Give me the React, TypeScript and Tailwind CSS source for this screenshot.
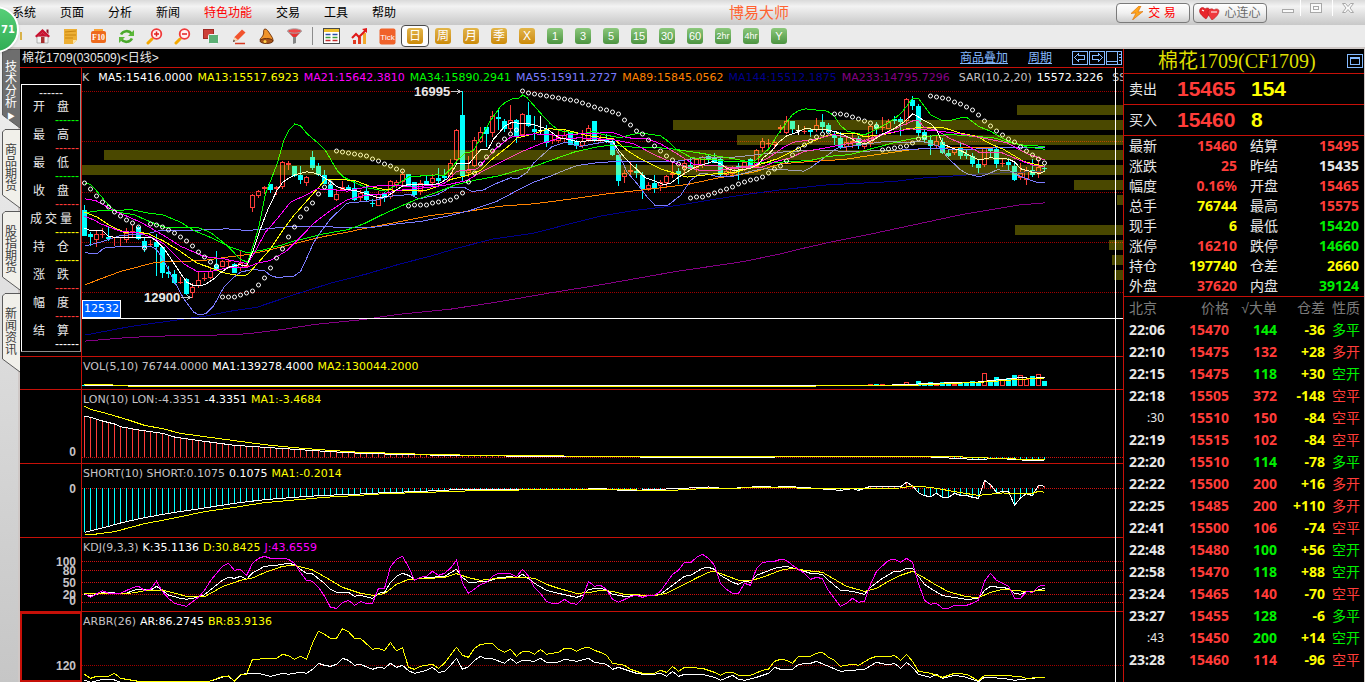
import type { ReactNode } from 'react'

const RED = '#ff3c39'
const CYAN = '#00ffff'

const menus = ['系统', '页面', '分析', '新闻', '特色功能', '交易', '工具', '帮助']
const periods = ['日', '周', '月', '季', 'X']
const minutes = ['1', '3', '5', '15', '30', '60', '2hr', '4hr', 'Y']
const sideTabs = ['技术分析', '商品期货', '股指期货', '新闻资讯']

const infoRows = [
  { label: '开盘', color: 'text-[#00ff00]' },
  { label: '最高', color: 'text-[#ff3c39]' },
  { label: '最低', color: 'text-[#00ff00]' },
  { label: '收盘', color: 'text-[#ff3c39]' },
  { label: '成交量', color: 'text-[#ffff00]' },
  { label: '持仓', color: 'text-[#ffff00]' },
  { label: '涨跌', color: 'text-[#ff3c39]' },
  { label: '幅度', color: 'text-[#ff3c39]' },
  { label: '结算', color: 'text-white' },
]

const red = 'text-[#ff3c39]'
const green = 'text-[#00f000]'
const yellow = 'text-[#ffff00]'
const white = 'text-[#e8e8e8]'

const stats = [
  ['最新', '15460', red, '结算', '15495', red],
  ['涨跌', '25', red, '昨结', '15435', white],
  ['幅度', '0.16%', red, '开盘', '15465', red],
  ['总手', '76744', yellow, '最高', '15575', red],
  ['现手', '6', yellow, '最低', '15420', green],
  ['涨停', '16210', red, '跌停', '14660', green],
  ['持仓', '197740', yellow, '仓差', '2660', yellow],
  ['外盘', '37620', red, '内盘', '39124', green],
]

const ticks = [
  ['22:06', '15470', '144', '-36', '多平', green],
  ['22:10', '15475', '132', '+28', '多开', red],
  ['22:15', '15475', '118', '+30', '空开', green],
  ['22:18', '15505', '372', '-148', '空平', red],
  [':30', '15510', '150', '-84', '空平', red],
  ['22:19', '15515', '102', '-84', '空平', red],
  ['22:20', '15510', '114', '-78', '多平', green],
  ['22:22', '15500', '200', '+16', '多开', red],
  ['22:25', '15485', '200', '+110', '多开', red],
  ['22:41', '15500', '106', '-74', '空平', red],
  ['22:48', '15480', '100', '+56', '空开', green],
  ['22:58', '15470', '118', '+88', '空开', green],
  ['23:24', '15465', '140', '-70', '空平', red],
  ['23:27', '15455', '128', '-6', '多平', green],
  [':43', '15450', '200', '+14', '空开', green],
  ['23:28', '15460', '114', '-96', '空平', red],
]

// colour, high, body top, body bottom, low - three units to a pixel, growing downwards
const candles = `
c375,390,467,467 c457,462,471,497 r452,463,482,502 r443,463,466,475 c437,471,476,484 r470,472,475,499 r470,472,475,499 r443,460,482,490
r435,453,456,475 c438,442,479,479 c470,483,503,515 r480,491,494,499 c461,485,500,588 c497,500,578,594 c558,575,582,594 c570,582,609,612
r591,607,610,612 c594,598,644,645 r610,622,641,655 r575,601,620,624 r580,594,597,603 r563,572,592,598 c513,554,566,568 r541,544,562,562
r541,543,547,560 c550,552,578,578 r510,548,562,573 r545,555,562,562 r343,346,386,396 r330,332,346,354 r318,322,328,343 c312,312,329,340
r318,320,327,345 r243,247,322,328 r243,250,256,270 c257,258,287,290 c258,284,299,311 r287,292,310,317 c213,231,264,270 c250,257,285,288
c270,286,313,313 c300,314,350,350 r327,341,358,362 r303,322,332,334 c315,322,327,332 c300,325,360,362 r330,338,352,363 c318,334,362,364
c357,368,372,380 r333,342,377,378 c335,339,354,367 r300,302,350,358 r300,306,316,325 r273,282,305,315 c282,283,320,322 c306,307,345,347
r300,309,337,345 c288,303,312,318 r283,295,309,312 c265,294,302,318 c267,288,294,300 r238,249,290,294 r148,150,240,248 c34,105,287,303
r228,270,280,290 r170,181,258,262 r140,157,187,190 c140,142,162,200 r93,108,160,172 c90,111,118,150 c117,123,147,157 r75,121,147,155
c117,120,170,188 r100,103,165,170 c66,105,138,140 c107,147,156,180 w108,151,154,165 c135,147,188,202 r160,180,183,193 r150,170,182,190
r150,165,178,185 c155,157,195,195 c180,183,197,206 r150,183,197,203 r135,143,180,185 c123,123,183,187 r165,178,182,190 c162,178,184,190
c180,184,227,227 c225,226,303,318 r270,278,290,308 r243,271,276,285 c252,272,277,294 c277,285,327,357 r305,314,326,334 c285,309,324,338
r300,306,318,332 r285,289,310,320 r250,278,284,294 c264,273,283,311 r235,250,264,284 c235,254,266,268 r236,238,265,277 r228,230,255,264
c222,228,236,252 c220,233,247,250 c235,237,285,290 r258,272,285,288 r258,264,282,290 c250,258,264,300 r243,247,270,273 c233,238,262,265
r208,211,262,264 r175,184,206,216 r177,190,194,205 r180,187,196,207 r135,142,147,160 r108,124,160,163 c123,124,148,158 w135,149,152,165
r138,153,157,162 c145,149,155,170 r114,136,152,157 c102,126,140,155 c130,135,157,160 c155,166,176,195 c155,175,202,206 r170,186,200,214
r155,183,188,204 c168,175,200,207 r178,191,200,207 r135,139,189,200 c127,136,147,162 r111,142,146,157 r117,122,145,148 c108,117,124,133
c110,118,128,167 r54,58,125,135 c48,60,77,90 c72,78,158,168 c150,156,180,187 c166,179,196,224 r168,184,199,205 c173,185,218,222
c210,219,227,230 r200,208,220,225 c190,204,228,238 c210,223,229,238 c219,227,251,262 c240,252,263,282 r200,205,256,260 c200,204,213,230
c200,208,252,264 r235,250,254,262 c235,246,255,270 c250,258,299,302 r250,280,296,300 r260,271,300,315 c237,270,284,291 r240,262,280,294
c255,263,266,277`
  .trim()
  .split(/\s+/)
  .map((s) => {
    const [high, top, bottom, low] = s.slice(1).split(',').map(Number)
    return { kind: s[0], high, top, bottom, low }
  })

// first candle of the run, then one dot per candle
const sar: [number, number[]][] = [
  [0, [310, 328, 347, 365, 382, 397, 409, 421, 430, 440, 503]],
  [11, [433, 436, 441, 451, 460, 470, 484, 499, 517, 532, 547, 558]],
  [23, [652, 650, 650, 646, 640, 634, 616, 595, 565, 535, 508, 472, 440, 412, 388, 370, 343, 322, 308]],
  [42, [214, 217, 220, 223, 226, 229, 236, 244, 253, 259, 268, 274]],
  [54, [379, 376, 374, 374, 370, 367, 364, 361, 352, 338, 307, 280, 253, 232, 214, 196, 178, 163, 151]],
  [73, [34, 40, 43, 46, 49, 52, 55, 58, 61, 64, 70, 76, 82, 86, 91, 95, 103, 121, 136, 152, 163, 181, 199, 214, 229, 241, 253, 263]],
  [101, [355, 352, 352, 346, 338, 332, 326, 320, 313, 307, 301, 298, 290, 280, 268, 259, 244, 226, 208, 196, 184, 172, 162, 155]],
  [125, [103, 103, 106, 112, 118, 124, 130, 137]],
  [133, [211, 208, 205, 202, 199, 190, 178, 170]],
  [141, [49, 52, 55, 58, 67, 73, 82, 91, 106, 124, 139, 154, 166, 178, 187, 202, 214, 226, 238, 250]],
]

const priceLines = [
  { color: '#840084', d: '12,782 130,772 220,767 370,765 501,760 620,745 700,732 850,717 950,702 1050,692 1110,686 1260,663 1410,637 1560,613 1780,574 1990,543 2100,520 2170,503 2240,487 2360,463 2500,433 2640,403 2820,373 2893,367' },
  { color: '#00008c', d: '12,764 150,738 300,717 380,706 450,692 530,680 640,643 750,608 860,580 960,550 1050,527 1130,503 1240,475 1360,458 1460,432 1560,407 1660,390 1790,375 1910,355 2010,340 2100,328 2240,313 2440,303 2520,293 2640,285 2700,280 2893,272' },
  { color: '#ff8200', d: '12,614 60,595 120,573 200,552 229,545 320,542 370,540 440,530 501,522 560,510 620,495 680,480 730,468 800,455 870,440 950,425 1050,405 1160,393 1260,377 1360,370 1460,357 1580,340 1700,327 1820,312 1910,293 2020,275 2100,250 2190,243 2290,237 2390,222 2490,208 2540,203 2893,200' },
  { color: '#7b7bff', d: '12,497 60,485 120,465 200,460 240,450 330,450 440,445 501,450 560,445 640,437 780,440 880,440 950,430 1020,423 1110,405 1175,388 1250,362 1310,330 1360,305 1410,287 1450,270 1490,255 1560,245 1660,243 1790,242 1860,232 1960,230 2100,215 2210,208 2300,213 2440,210 2520,205 2680,206 2780,200 2893,200' },
  { color: '#7b7bff', d: '12,514 30,520 50,520 70,503 120,498 210,497 229,508 250,540 280,600 310,655 340,695 355,703 375,700 400,675 430,620 460,590 480,575 510,568 550,569 570,585 590,591 640,587 660,573 680,530 700,485 720,455 750,415 800,368 880,360 930,347 990,342 1015,355 1070,343 1110,320 1150,320 1175,333 1210,328 1240,312 1290,292 1310,295 1340,275 1360,247 1390,220 1415,198 1455,185 1500,198 1540,190 1580,183 1597,190 1615,220 1640,275 1670,310 1700,350 1725,376 1760,376 1800,345 1830,300 1860,278 1880,280 1910,288 1960,287 2020,270 2050,265 2100,267 2170,272 2190,262 2240,225 2270,203 2330,195 2420,182 2480,187 2520,182 2551,190 2575,197 2600,230 2640,268 2660,280 2695,289 2720,282 2750,268 2785,270 2820,288 2870,306 2893,307' },
  { color: '#00ff00', d: '12,397 60,390 155,388 200,397 250,404 300,425 340,450 400,475 450,500 501,517 550,508 610,492 640,482 730,460 800,448 850,430 900,405 950,382 1000,360 1070,335 1125,313 1180,300 1260,285 1310,270 1360,258 1410,240 1480,215 1560,197 1600,195 1660,200 1760,203 1860,218 1960,235 2020,247 2100,245 2190,240 2240,228 2310,222 2390,200 2460,182 2520,170 2570,165 2610,162 2660,166 2740,172 2780,184 2820,193 2893,198' },
  { color: '#00ff00', d: '12,307 30,312 50,333 85,375 110,395 160,402 200,420 250,440 300,440 350,440 390,456 440,495 480,537 501,545 520,490 535,440 555,340 590,250 610,180 625,150 643,130 660,136 680,160 715,190 735,210 770,270 790,290 820,305 860,322 915,332 940,318 985,289 1070,283 1090,285 1115,260 1135,235 1155,217 1165,217 1180,208 1205,165 1230,120 1260,78 1275,65 1295,55 1315,53 1327,43 1340,52 1360,75 1380,98 1410,130 1435,150 1470,155 1505,160 1540,152 1565,162 1620,172 1650,163 1680,157 1740,166 1760,180 1790,208 1830,230 1865,236 1900,237 1940,243 2010,243 2025,240 2045,222 2065,205 2090,165 2135,103 2155,90 2175,85 2240,92 2260,105 2280,135 2300,152 2325,158 2353,163 2390,145 2430,123 2460,100 2480,75 2495,54 2515,55 2530,75 2551,103 2587,121 2610,120 2640,112 2660,112 2695,138 2730,152 2760,170 2785,183 2810,190 2840,200 2893,206' },
  { color: '#ffff00', d: '12,395 50,410 85,433 130,455 200,458 250,482 300,513 350,548 400,565 430,577 480,586 501,583 530,550 570,505 610,445 640,405 680,360 735,297 820,299 870,318 900,325 950,330 1035,330 1070,318 1110,297 1160,285 1200,270 1230,240 1290,192 1310,172 1360,160 1405,145 1450,147 1520,165 1600,175 1640,210 1680,235 1740,265 1820,290 1860,285 1920,278 1960,277 2020,258 2090,235 2140,210 2190,185 2240,165 2280,158 2325,158 2350,168 2390,165 2430,158 2480,145 2520,141 2590,142 2640,158 2690,168 2730,190 2770,207 2830,243 2893,258' },
  { color: '#ff00ff', d: '12,408 40,418 60,430 120,452 180,458 220,473 250,490 280,520 310,550 350,573 390,573 440,562 501,560 530,548 570,540 620,510 660,470 700,428 750,390 800,358 850,345 910,340 950,330 1020,323 1090,315 1160,300 1210,270 1270,240 1320,215 1380,190 1430,175 1500,172 1600,178 1660,190 1720,222 1760,240 1820,260 1860,270 1910,270 1980,262 2040,262 2080,245 2130,232 2170,213 2230,203 2300,190 2370,180 2410,160 2490,145 2560,150 2640,160 2720,175 2780,187 2840,220 2893,238' },
  { color: '#ff00ff', d: '12,355 45,360 100,390 180,425 250,465 300,497 370,528 430,535 501,550 520,520 555,455 590,415 630,365 680,342 710,325 760,328 800,332 870,317 950,315 1000,320 1090,310 1130,272 1190,265 1250,200 1290,170 1360,160 1440,165 1520,158 1600,157 1640,172 1700,175 1740,190 1790,220 1840,252 1900,255 1960,262 2020,255 2070,228 2110,200 2140,185 2210,175 2260,162 2310,172 2353,180 2420,155 2497,121 2515,121 2530,140 2570,150 2610,175 2660,195 2695,215 2760,215 2820,240 2860,255 2893,258' },
  { color: '#ffffff', d: '12,443 30,450 67,451 85,468 100,470 210,470 229,482 247,500 265,525 301,580 319,605 337,614 355,615 373,613 400,595 420,577 445,560 475,553 499,555 520,505 540,445 560,392 589,330 607,305 625,293 643,283 679,274 700,277 715,282 745,300 769,318 787,325 823,330 859,340 895,352 920,348 945,330 967,316 985,312 1030,313 1075,310 1100,295 1111,280 1129,250 1165,250 1183,228 1201,207 1222,207 1240,175 1273,137 1291,127 1327,128 1360,132 1399,145 1435,172 1460,176 1500,185 1525,180 1560,180 1597,184 1615,210 1633,232 1651,250 1675,272 1695,292 1720,300 1750,313 1770,308 1795,290 1813,278 1840,262 1867,253 1895,243 1921,250 1939,264 1960,270 2010,264 2035,250 2050,230 2070,215 2095,185 2120,165 2150,155 2175,143 2200,147 2240,148 2270,155 2300,168 2325,182 2353,190 2380,178 2407,160 2440,145 2470,125 2497,100 2515,110 2530,120 2551,130 2569,150 2587,190 2615,203 2640,210 2695,238 2730,232 2785,236 2803,245 2821,265 2840,270 2860,277 2880,278 2893,272' },
]

// [offset from the top line, width in px counted from the right edge]
const profile = [[75, 106], [120, 450], [165, 386], [210, 1019], [255, 1041], [300, 49], [345, 6], [435, 108], [480, 14], [525, 11], [570, 9]]

// indicator series: candle index, level (levels run down the whole indicator stack)
const lon = '0,199 1,202 3,213 5,222 6,230 9,240 13,250 15,261 20,274 25,286 30,292 35,298 40,304 45,309 50,312 60,316 75,319 90,320 95,322 115,321 140,320 148,328 153,326 156,330 160,331'
const lonMa = '0,169 1,178 3,187 7,208 10,226 13,236 16,250 20,260 25,272 30,284 35,293 40,300 45,306 55,312 65,316 80,318 95,321 145,320 152,325 160,330'
const short = '0,547 3,534 6,519 10,503 15,487 20,474 25,460 30,449 35,442 40,436 45,433 50,428 55,425 62,419 65,418 84,417 86,415 88,419 90,422 93,420 97,417 102,413 104,411 107,416 113,409 115,412 117,409 121,414 126,421 128,416 129,421 131,409 136,410 137,397 138,407 139,428 140,437 141,440 142,430 143,442 144,442 145,430 146,436 147,436 148,442 149,445 150,391 151,404 152,427 154,424 155,466 156,444 157,431 158,437 159,406 160,409'
const shortMa = '0,552 2,552 5,545 10,521 15,504 20,485 25,472 30,458 35,450 40,442 45,437 50,431 57,427 65,422 80,418 98,421 104,415 115,413 126,416 136,414 138,408 141,412 146,428 149,436 153,429 158,430 159,424 160,427'
const kdjJ = '0,731 1,742 3,722 4,730 6,730 8,713 9,709 10,721 11,718 12,694 13,725 14,745 15,760 17,769 19,742 20,721 21,692 22,670 23,649 24,640 25,661 26,658 27,677 28,640 29,625 30,619 31,625 33,625 34,628 35,640 36,668 37,691 38,694 39,712 40,739 41,772 42,775 43,758 44,751 45,766 46,755 47,760 48,760 49,715 50,715 51,650 52,628 53,619 54,650 55,691 56,682 57,679 58,664 59,676 60,670 61,655 62,630 63,700 64,730 66,704 67,697 68,679 69,670 71,671 72,680 73,658 74,678 75,713 76,730 77,755 78,760 79,760 80,748 81,760 82,763 83,745 84,694 85,709 86,706 87,718 88,748 89,757 91,740 92,736 93,742 94,736 95,736 96,724 98,673 99,661 100,637 101,639 102,622 103,613 104,625 105,646 106,700 107,718 108,730 109,730 110,700 111,706 112,655 113,637 115,634 116,628 117,631 118,646 120,670 121,688 122,682 123,686 124,722 125,745 126,769 127,760 128,745 129,757 130,754 131,703 132,664 134,631 135,628 136,637 137,625 138,637 139,700 140,751 141,763 142,760 143,775 144,775 145,766 147,766 148,760 149,750 150,694 151,670 152,691 154,709 155,745 156,745 157,725 158,727 159,709 160,706'
const kdjK = '0,733 1,738 3,728 7,730 8,722 9,718 11,721 12,709 13,722 14,735 16,745 17,748 19,742 20,734 22,705 23,691 24,682 25,685 26,679 27,688 28,669 30,649 32,646 34,640 35,644 36,658 37,670 38,672 40,700 41,718 42,727 44,727 45,739 46,736 48,745 49,730 50,727 51,697 52,679 53,670 54,676 55,688 57,683 60,679 62,658 63,682 64,697 67,695 69,683 71,680 72,683 73,673 75,700 77,721 79,730 82,742 83,736 84,718 86,715 87,720 88,733 90,739 92,737 95,737 96,733 98,706 100,679 101,676 103,655 104,652 105,658 106,676 108,697 109,703 110,694 111,697 112,676 115,655 117,649 119,658 121,670 123,673 124,691 126,721 128,724 130,733 131,712 133,685 135,664 136,664 137,655 138,655 140,703 141,715 143,737 147,748 149,746 150,721 151,709 154,715 155,730 156,733 157,725 158,725 160,715'
const kdjD = '0,731 8,729 10,722 13,720 17,739 20,740 23,710 26,691 28,684 30,668 33,649 35,646 38,660 40,680 43,712 46,730 48,736 50,731 52,703 54,688 57,686 60,682 62,671 64,683 66,691 69,685 73,682 75,685 77,703 79,715 82,730 84,728 86,721 88,724 90,733 95,737 97,730 100,703 102,684 104,667 105,664 108,684 109,691 111,692 113,682 116,661 118,655 120,661 123,667 125,688 127,709 130,724 132,715 134,694 136,676 138,664 140,684 142,706 144,725 147,740 149,743 151,727 153,718 155,721 157,725 160,721'
const ar = '0,990 1,997 3,988 5,990 6,997 20,997 21,993 23,981 24,979 25,993 26,975 27,970 29,970 31,979 33,970 34,973 36,967 37,970 38,958 39,940 40,946 41,949 42,943 43,925 44,931 45,946 46,943 48,958 49,952 50,955 51,940 52,952 53,946 54,962 55,970 57,961 58,952 59,967 60,965 61,946 62,925 63,958 64,950 65,931 66,919 67,927 68,926 70,940 71,925 72,940 73,931 75,934 76,925 77,937 79,936 80,928 82,934 84,925 85,937 87,943 88,958 89,952 92,970 94,975 96,970 97,979 98,964 99,979 100,973 103,973 105,982 106,991 108,976 109,988 110,991 112,982 114,970 115,952 116,958 118,958 119,943 121,940 122,934 124,949 126,964 130,958 132,937 134,945 135,940 136,955 137,937 138,952 139,973 141,982 142,973 143,985 145,976 147,982 149,995 150,982 153,985 155,991 160,981'
const br = '0,973 1,985 2,979 4,979 5,970 6,985 9,994 12,996 21,993 23,979 24,978 25,993 26,973 27,973 28,928 32,925 33,913 34,917 35,928 36,919 37,928 38,880 39,844 40,853 41,865 42,865 43,836 44,845 45,865 46,865 48,898 49,895 50,902 51,878 52,902 53,893 54,952 55,958 56,949 58,943 59,955 60,940 61,916 62,892 63,916 64,922 65,895 66,883 68,880 69,898 70,907 71,898 72,919 73,904 74,904 75,913 76,898 77,913 79,907 80,895 81,895 82,904 83,895 84,892 85,901 86,907 87,916 88,940 90,946 91,958 93,970 95,970 96,961 97,967 98,949 99,964 100,952 103,955 105,967 106,976 107,967 108,967 109,976 111,976 113,961 114,958 115,934 116,928 117,931 118,940 119,919 121,919 122,910 123,907 124,922 125,931 126,949 128,943 129,946 131,925 132,919 134,921 135,916 136,931 137,913 138,934 139,964 141,970 143,982 145,970 147,973 149,992 150,976 153,976 156,980 157,985 160,982'
const volMa1 = '0,105 6,108 130,107 137,104 140,101 145,98 149,96 152,90 156,83 158,85 160,82'
const volMa2 = '0,103 4,104 8,109 120,109 124,107 138,106 145,100 150,96 153,92 156,88 160,84'

const volTail = [4, 1, 5, 3, 4, 3, 4, 3, 3, 3, 3, 5, 4, 13, 4, 9, 6, 8, 11, 11, 7, 10, 12, 5]
const volumes = candles.map((_, i) => (i >= 137 ? volTail[i - 137] : i >= 131 && i < 134 ? 2 : 1))

const parse = (s: string) => s.split(' ').map((p) => p.split(',').map(Number))

function levelAt(points: number[][], i: number) {
  const k = points.findIndex((p) => p[0] >= i)
  if (k <= 0) return points[0][1]
  const [x0, y0] = points[k - 1]
  const [x1, y1] = points[k]
  return y0 + ((y1 - y0) * (i - x0)) / (x1 - x0)
}

function Series({ data, top, color }: { data: string; top: number; color: string }) {
  const points = parse(data).map(([i, y]) => `${i * 6 + 2.5},${(y - top) / 3}`).join(' ')
  return <polyline points={points} fill="none" stroke={color} />
}

function Bars({ data, top, zero }: { data: string; top: number; zero: number }) {
  const points = parse(data)
  return (
    <>
      {candles.map((_, i) => {
        const y = levelAt(points, i)
        return (
          <line key={i} x1={i * 6 + 2.5} x2={i * 6 + 2.5} y1={(zero - top) / 3} y2={(y - top) / 3}
            stroke={y < zero ? RED : CYAN} />
        )
      })}
    </>
  )
}

function Grid({ levels, top, color = '#d01010' }: { levels: number[]; top: number; color?: string }) {
  return (
    <>
      {levels.map((y) => (
        <line key={y} x1="0" x2="100%" y1={Math.floor((y - top) / 3) + 0.5} y2={Math.floor((y - top) / 3) + 0.5}
          stroke={color} strokeDasharray="1 1" shapeRendering="auto" />
      ))}
    </>
  )
}

type PaneProps = {
  size: string
  top: number
  axis?: [string, number][]
  active?: boolean
  legend: ReactNode
  children: ReactNode
}

function Pane({ size, top, axis = [], active, legend, children }: PaneProps) {
  return (
    <section className={`flex border-b border-[#c61008] ${size}`}>
      <div className={`w-[62px] shrink-0 border-[#c61008] ${active ? 'border-2' : 'border-r'}`}>
        <svg className="w-full h-full overflow-visible">
          {axis.map(([label, y]) => (
            <text key={label} x={active ? 54 : 56} y={(y - top) / 3 + (active ? 3 : 5)} textAnchor="end" fill="#c6c3c6"
              className="text-[12px] font-bold">{label}</text>
          ))}
        </svg>
      </div>
      <div className="relative flex-1 min-w-0 overflow-hidden">
        <svg className="absolute inset-0 w-full h-full" shapeRendering="crispEdges">{children}</svg>
        <p className="relative flex gap-1 pt-px pl-px font-['DejaVu_Sans'] text-[11px] leading-[18px] whitespace-nowrap text-[#c6c3c6]">
          {legend}
        </p>
      </div>
    </section>
  )
}

function PriceChart() {
  return (
    <svg className="absolute inset-0 w-full h-full" shapeRendering="crispEdges">
      {[23, 73, 124, 174, 224].map((y) => (
        <line key={y} x1="0" x2="100%" y1={y + 0.5} y2={y + 0.5} stroke="#a00000" strokeDasharray="1 1" shapeRendering="auto" />
      ))}
      {candles.map((c, i) => {
        const x = i * 6 + 2
        const color = c.kind === 'c' ? CYAN : c.kind === 'r' ? RED : '#ffffff'
        const top = Math.round(c.top / 3) + 12
        const h = Math.max(1, Math.round((c.bottom - c.top) / 3))
        const high = Math.round(c.high / 3) + 12
        const low = Math.round(c.low / 3) + 12
        return (
          <g key={i} fill={color}>
            <rect x={x} y={high} width="1" height={Math.max(0, top - high)} />
            <rect x={x} y={top + h} width="1" height={Math.max(0, low - top - h)} />
            {c.kind === 'r' && h > 2
              ? <rect x={x - 1.5} y={top + 0.5} width="4" height={h - 1} fill="none" stroke={color} />
              : <rect x={x - 2} y={top} width="5" height={h} />}
          </g>
        )
      })}
      <g transform="translate(-1.5 12.5) scale(.33333)" fill="none">
        {priceLines.map((l, i) => (
          <polyline key={i} points={l.d} stroke={l.color} vectorEffect="non-scaling-stroke" />
        ))}
      </g>
      <g fill="none" stroke="#ffffff" shapeRendering="auto">
        {sar.map(([start, ys]) => ys.map((y, k) => (
          <circle key={start + k} cx={(start + k) * 6 + 2.5} cy={Math.round(y / 3) + 12} r="2" />
        )))}
      </g>
      <svg x="100%" className="overflow-visible">
        {profile.map(([y, w]) => (
          <rect key={y} x={-w} y={y / 3 + 12} width={w} height="10" fill="#fff800" fillOpacity=".29" />
        ))}
      </svg>
      <g fill="#e8e8e8" className="text-[13px] font-bold">
        <text x="332" y="28">16995</text>
        <text x="62" y="234">12900</text>
      </g>
      <path d="M369 23.5h10M375 21.5l4 2l-4 2M99 229.5h10M105 227.5l4 2l-4 2" fill="none" stroke="#c6c3c6" />
      <line x1="0" x2="100%" y1="250.5" y2="250.5" stroke="#ffffff" />
    </svg>
  )
}

function MenuBar() {
  return (
    <header className="flex items-center h-[25px] shrink-0 bg-linear-to-b from-[#dadada] via-[#f3f3f3] via-25% to-[#c8c8c8]">
      <nav className="flex gap-6 pl-3 pt-px text-[12px]">
        {menus.map((m) => (
          <button key={m} className={m === '特色功能' ? 'text-[#ff0000]' : 'text-black'}>{m}</button>
        ))}
      </nav>
      <h1 className="flex-1 pl-[6px] pt-px text-center text-[15px] text-[#ff6331]">博易大师</h1>
      <div className="flex gap-[3px] text-[12px]">
        <button className="flex items-center justify-center gap-1 w-[74px] h-5 rounded border border-[#7a7a7a] bg-linear-to-b from-white via-[#f0f0f0] to-[#cfcfcf] text-[#ff0000]">
          <svg width="14" height="14" viewBox="0 0 14 14"><path d="M9 0L1 7.5l5-.5l-3.500 7L13 5.500l-5 .5L11 0z" fill="#ffa51c" stroke="#d66a00" strokeWidth=".6" /></svg>
          交 易
        </button>
        <button className="flex items-center justify-center gap-1 w-[74px] h-5 rounded border border-[#7a7a7a] bg-linear-to-b from-white via-[#f0f0f0] to-[#cfcfcf] text-[#6b6b6b]">
          <svg width="21" height="14" viewBox="0 0 21 14">
            <path d="M7 13C0 8 0 5 1 3s4-2 5 0c2-2 5-1 5 2s-2 5-4 8z" fill="#e8262b" stroke="#a81015" strokeWidth=".5" />
            <path d="M13 14C9 9 8 6 10 4s4-1 5 0c2-2 5-1 5 1s-2 6-7 9z" fill="#f0383c" stroke="#a81015" strokeWidth=".5" />
            <path d="M3 4l2 1M12 6l6 0" stroke="#ffffff" strokeWidth="1.200" />
          </svg>
          心连心
        </button>
      </div>
      <div className="flex items-start h-full ml-[14px] text-[#a8a8a8]">
        <button aria-label="最小化" className="w-5 h-4 border-r border-white">
          <svg width="14" height="14" fill="#fafafa" stroke="currentColor"><rect x="1.500" y="8.500" width="11" height="3" /></svg>
        </button>
        <button aria-label="最大化" className="w-8 h-4 pl-2 border-r border-white">
          <svg width="14" height="14" fill="#fafafa" stroke="currentColor"><rect x="1.500" y="2.500" width="11" height="9" /><rect x="4.500" y="5.500" width="5" height="3" /></svg>
        </button>
        <button aria-label="关闭" className="w-8 h-4 pl-2">
          <svg width="14" height="14"><path d="M1.500 2.500h3L7 5.500l2.500-3h3L9 7l3.500 4.500h-3L7 8.500l-2.500 3h-3L5 7z" fill="#fafafa" stroke="currentColor" /></svg>
        </button>
      </div>
    </header>
  )
}

function Tool({ name, children }: { name: string; children: ReactNode }) {
  return (
    <button aria-label={name} className="flex items-center justify-center w-7 h-[21px]">
      <svg width="17" height="17" viewBox="0 0 17 17">{children}</svg>
    </button>
  )
}

function Magnifier({ plus }: { plus?: boolean }) {
  return (
    <>
      <path d="M2 15l4-4" stroke="#f5a800" strokeWidth="3" strokeLinecap="round" />
      <circle cx="10.500" cy="6" r="4.800" fill="#fff2f2" stroke="#f03a3a" strokeWidth="1.800" />
      <path d={plus ? 'M8 6h5M10.500 3.500v5' : 'M8 6h5'} stroke="#e02020" strokeWidth="1.500" />
    </>
  )
}

function Toolbar() {
  return (
    <div className="flex items-center h-[24px] shrink-0 pl-5 bg-[#ebebeb] border-b-2 border-[#cfc8c6]">
      <span className="w-[2px] h-2 mr-[6px] bg-[#d9b24a]" />
      <Tool name="主页">
        <path d="M3 8h11v7H3z" fill="#f2f2f2" stroke="#999999" strokeWidth=".7" />
        <path d="M8.500 1L1 8l1.500 1.500l6-5l6 5L16 8z" fill="#c8102e" />
        <path d="M8.500 4.500l5 4H3.500z" fill="#c8102e" />
        <path d="M12.500 1.500h2V6l-2-2z" fill="#8c1020" />
        <path d="M7 9h3.500v6H7z" fill="#a83030" />
      </Tool>
      <Tool name="公告">
        <path d="M2 1h13v11l-4 4H2z" fill="#edaf35" />
        <path d="M11 16v-4h4z" fill="#fbe3a5" />
        <path d="M3 4l11-1M3 7h11M3 10h8" stroke="#c98610" />
      </Tool>
      <Tool name="F10">
        <path d="M4 1h9v3H4z" fill="#f7a335" />
        <rect x="1" y="3" width="15" height="12" rx="2" fill="#ee6a1c" />
        <text x="8.500" y="12" textAnchor="middle" fill="#ffffff" className="font-['Liberation_Serif'] text-[8px] font-bold">F10</text>
      </Tool>
      <Tool name="刷新">
        <path d="M3 6.500C5 2.500 11 2 13.500 5.500M14 10.500C12 14.500 6 15 3.500 11.500" fill="none" stroke="#4aa92c" strokeWidth="2.600" />
        <path d="M16 2v6h-6zM1 15V9h6z" fill="#5cb83a" />
      </Tool>
      <Tool name="放大"><Magnifier plus /></Tool>
      <Tool name="缩小"><Magnifier /></Tool>
      <Tool name="叠加">
        <rect x="1.500" y="1.500" width="10" height="9" fill="#cc4038" stroke="#a02a25" />
        <rect x="6.500" y="6.500" width="10" height="9" rx="1" fill="#5db075" stroke="#f4f4f4" />
      </Tool>
      <Tool name="画线">
        <path d="M3 14l1.500-5L12 1.500l3.500 3L8 12z" fill="#f2532d" />
        <path d="M3 14l1.500-5L8 12z" fill="#f7d7b0" /><path d="M3 14l.7-2.300l1.600 1.400z" fill="#333333" />
        <path d="M5 15.500h10" stroke="#d63a22" strokeWidth="1.500" />
      </Tool>
      <Tool name="预警">
        <path d="M7 1C9 1 10 3 12 6s3 4 3 7l-13-1C2 10 5 9 5.500 6S5 1.500 7 1z" fill="#f0942a" stroke="#7a3a10" />
        <ellipse cx="8.500" cy="13" rx="6.500" ry="2.500" fill="#a8541a" stroke="#6b300c" />
        <circle cx="7" cy="13.500" r="1.500" fill="#ffd24a" />
      </Tool>
      <Tool name="筛选">
        <path d="M1 3l6 6v7l3-1V9l6-6z" fill="#858585" />
        <path d="M3.500 5h10L10 9H7z" fill="#e83030" />
        <ellipse cx="8.500" cy="3" rx="7" ry="2.200" fill="#f04848" stroke="#a8a8a8" />
      </Tool>
      <span className="w-px h-[18px] mx-[4px] bg-[#8c8c8c]" />
      <Tool name="报价">
        <rect x=".5" y=".5" width="16" height="15" fill="#ffffff" stroke="#4a4a4a" />
        <path d="M1 2.500h15" stroke="#f2c12c" strokeWidth="3" />
        <path d="M2.500 6.500h5M9.500 6.500h5" stroke="#2c4fa8" strokeWidth="1.500" />
        <path d="M2.500 9.500h5M9.500 9.500h5" stroke="#3a9e3a" strokeWidth="1.500" />
        <path d="M2.500 12.500h5M9.500 12.500h5" stroke="#c82c2c" strokeWidth="1.500" />
      </Tool>
      <Tool name="走势">
        <path d="M2 16v-4h3v4zM7 16V9h3v7z" fill="#e03a20" />
        <path d="M12 16V5h3v11z" fill="#f2a82c" />
        <path d="M1 10l4-4l3 3l7-7" fill="none" stroke="#e01818" strokeWidth="2" /><path d="M16 0v5l-5-4z" fill="#e01818" />
      </Tool>
      <Tool name="分笔">
        <rect x=".5" y=".5" width="16" height="16" rx="2" fill="#f0622a" />
        <text x="8.500" y="11.500" textAnchor="middle" fill="#ffffff" className="text-[8px]">Tick</text>
      </Tool>
      {periods.map((p) => (
        <button key={p} className={`flex items-center justify-center w-7 h-[22px] ${p === '日' ? 'rounded border border-[#4a4a4a] bg-white' : ''}`}>
          <span className="flex items-center justify-center w-4 h-4 rounded-[3px] bg-linear-to-b from-[#e2b548] to-[#cc8a00] text-[12px] leading-none text-white">{p}</span>
        </button>
      ))}
      {minutes.map((m) => (
        <button key={m} className="flex items-center justify-center w-7 h-[22px]">
          <span className={`flex items-center justify-center w-4 h-4 rounded-[3px] bg-linear-to-b from-[#8cc87c] to-[#4c9440] leading-none text-white ${m.length > 2 ? 'text-[9px]' : 'text-[11px]'}`}>{m}</span>
        </button>
      ))}
    </div>
  )
}

function SideTabs() {
  return (
    <nav className="flex flex-col gap-px w-5 shrink-0 bg-linear-to-b from-[#f0f0f0] to-[#c6c6c6] border-r-2 border-[#cfc8c6]">
      {sideTabs.map((t, i) => (
        <button key={t} className={`relative w-5 pl-1 text-[12px] leading-3 ${i === 0 ? 'h-[79px] text-white' : 'h-[81px] text-[#3c3c3c]'}`}>
          <svg className="absolute inset-0 w-5 h-[81px]">
            <path d="M20 .5H5L2.500 3v63L20 79" fill={i === 0 ? '#6e6e6e' : '#f1f0ea'} stroke="#5a5a5a" />
          </svg>
          <span className={`relative flex flex-col items-center w-[14px] ${i === 0 ? 'pt-1' : 'pb-1'}`}>
            {t.split('').map((c) => <span key={c}>{c}</span>)}
            {i === 0 && <span className="pt-1 text-[8px] leading-none">▶</span>}
          </span>
        </button>
      ))}
    </nav>
  )
}

function InfoBox() {
  return (
    <div className="flex flex-col mt-4 ml-px h-[268px] border border-t-white border-l-white border-r-[#8c8c8c] border-b-[#8c8c8c] text-[12px] text-[#e8e8e8]">
      <p className="h-[13px] leading-4 text-center">------</p>
      {infoRows.map((r) => (
        <div key={r.label} className="h-7">
          <p className={`flex justify-between mx-auto h-[18px] leading-[18px] ${r.label.length > 2 ? 'w-[42px]' : 'w-9'}`}>
            {r.label.split('').map((c) => <span key={c}>{c}</span>)}
          </p>
          <p className={`h-[10px] leading-[8px] pr-px text-right ${r.color}`}>------</p>
        </div>
      ))}
    </div>
  )
}

function BoxIcon({ name, d }: { name: string; d: string }) {
  return (
    <button aria-label={name}>
      <svg width="16" height="14" fill="none" stroke="#84baff" shapeRendering="crispEdges">
        <rect x=".5" y=".5" width="15" height="13" />
        <path d={d} />
      </svg>
    </button>
  )
}

function Quote() {
  return (
    <aside className="w-[242px] shrink-0 border-l border-r border-l-[#c61008] border-r-[#cfc8c6]">
      <div className="flex items-center h-[25px] pl-[34px] pr-px border-b border-[#c61008]">
        <h2 className="flex-1 font-['Liberation_Serif','Noto_Sans_CJK_SC',serif] text-[20px] leading-6 whitespace-nowrap text-[#dede00]">棉花1709(CF1709)</h2>
        <BoxIcon name="窗口" d="M3.500 3.500h9v7h-9zM3 4.500h10" />
      </div>
      {[['卖出', '15465', '154'], ['买入', '15460', '8']].map(([label, price, lots]) => (
        <div key={label} className="flex items-center h-[31px] pl-[5px] border-b border-[#c61008] font-['Liberation_Sans','Noto_Sans_CJK_SC',sans-serif] font-bold text-[21px] leading-6">
          <span className="w-12 text-[14px] leading-5 font-normal text-[#e8e8e8]">{label}</span>
          <span className="w-[74px] text-[#ff3c39]">{price}</span>
          <span className="text-[#ffff00]">{lots}</span>
        </div>
      ))}
      <div className="border-b border-[#c61008]">
        <table className="w-full table-fixed text-[14px] leading-5">
          <tbody>
            {stats.map(([a, b, bc, c, d, dc]) => (
              <tr key={a} className="h-5">
                <th className="w-[45px] p-0 pl-[5px] text-left font-normal text-[#e8e8e8]">{a}</th>
                <td className={`w-[68px] p-0 text-right font-bold font-['Noto_Sans'] ${bc}`}>{b}</td>
                <th className="w-[50px] p-0 pl-[13px] text-left font-normal text-[#e8e8e8]">{c}</th>
                <td className={`p-0 pr-[5px] text-right font-bold font-['Noto_Sans'] ${dc}`}>{d}</td>
              </tr>
            ))}
          </tbody>
        </table>
      </div>
      <table className="w-full table-fixed text-[14px] leading-[22px] text-right">
        <thead>
          <tr className="h-[22px] text-[#7b7b7b]">
            <th className="w-[41px] p-0 pl-[5px] text-left font-normal">北京</th>
            <th className="w-[64px] p-0 font-normal">价格</th>
            <th className="w-12 p-0 font-normal whitespace-nowrap">√大单</th>
            <th className="w-12 p-0 font-normal">仓差</th>
            <th className="p-0 pr-1 font-normal">性质</th>
          </tr>
        </thead>
        <tbody className="font-bold font-['Noto_Sans','Noto_Sans_CJK_SC',sans-serif]">
          {ticks.map(([time, price, lots, diff, kind, color]) => (
            <tr key={time} className="h-[22px]">
              <td className={`p-0 ${white} ${time.length < 4 ? 'pr-px text-[12px] font-normal' : ''}`}>{time}</td>
              <td className={`p-0 ${red}`}>{price}</td>
              <td className={`p-0 ${color}`}>{lots}</td>
              <td className={`p-0 ${yellow}`}>{diff}</td>
              <td className={`p-0 pr-1 font-normal ${color}`}>{kind}</td>
            </tr>
          ))}
        </tbody>
      </table>
    </aside>
  )
}

export default function App() {
  return (
    <div className="relative flex flex-col h-screen overflow-hidden bg-black font-['Liberation_Sans','Noto_Sans_CJK_SC',sans-serif]">
      <MenuBar />
      <Toolbar />

      <div className="flex flex-1 min-h-0">
        <SideTabs />

        <main className="relative flex flex-col flex-1 min-w-0">
          <div className="flex items-center h-[19px] shrink-0 pl-[2px] pr-px border-b border-[#c61008] text-[12px] text-[#e8e8e8]">
            <h2 className="flex-1">棉花1709(030509)&lt;日线&gt;</h2>
            <a href="#overlay" className="mr-5 underline text-[#84baff]">商品叠加</a>
            <a href="#period" className="mr-5 underline text-[#84baff]">周期</a>
            <div className="flex gap-px">
              <BoxIcon name="向左" d="M2.500 6.500l4-4v2h6v4h-6v2z" />
              <BoxIcon name="向右" d="M13.500 6.500l-4-4v2h-6v4h6v2z" />
              <BoxIcon name="布局" d="M0 10.500h11M11.500 0v14M13 3.500h2M13 6.500h2M13 9.500h2" />
            </div>
          </div>

          {/* K线 */}
          <section className="flex h-[289px] shrink-0 border-b border-[#c61008]">
            <div className="w-[62px] shrink-0 border-r border-[#c61008]">
              <InfoBox />
            </div>
            <div className="relative flex-1 min-w-0 overflow-hidden">
              <PriceChart />
              <p className="relative flex gap-[5px] pt-px font-['DejaVu_Sans'] text-[11px] leading-[18px] whitespace-nowrap text-[#c6c3c6]">
                <span className="mr-1">K</span>
                <span className="text-white">MA5:15416.0000</span>
                <span className="text-[#ffff00]">MA13:15517.6923</span>
                <span className="text-[#ff00ff]">MA21:15642.3810</span>
                <span className="text-[#00ff00]">MA34:15890.2941</span>
                <span className="text-[#7b7bff]">MA55:15911.2727</span>
                <span className="text-[#ff8200]">MA89:15845.0562</span>
                <span className="text-[#00008c]">MA144:15512.1875</span>
                <span className="text-[#840084]">MA233:14795.7296</span>
                <span className="ml-1">SAR(10,2,20)</span>
                <span className="text-white">15572.3226</span>
                <span className="ml-1">SS</span>
              </p>
              <span className="absolute left-0 top-[232px] w-[39px] h-[18px] border border-white bg-[#0063ff] text-center font-['DejaVu_Sans'] text-[11px] leading-4 text-white">12532</span>
            </div>
          </section>

          <Pane size="h-[33px] shrink-0" top={21} legend={
            <>VOL(5,10) 76744.0000 <span className="text-white">MA1:139278.4000</span> <span className="text-[#ffff00]">MA2:130044.2000</span></>
          }>
            {candles.map((c, i) => (
              c.kind === 'r' && volumes[i] > 3
                ? <rect key={i} x={i * 6 + 0.5} y={29.5 - volumes[i]} width="4" height={volumes[i] - 1} fill="none" stroke={RED} />
                : <rect key={i} x={i * 6} y={29 - volumes[i]} width="5" height={volumes[i]} fill={c.kind === 'r' ? RED : CYAN} />
            ))}
            <Series data={volMa1} top={21} color="#ffffff" />
            <Series data={volMa2} top={21} color="#ffff00" />
          </Pane>

          <Pane size="h-[74px] shrink-0" top={120} axis={[['0', 304]]} legend={
            <>LON(10) LON:-4.3351 <span className="text-white">-4.3351</span> <span className="text-[#ffff00]">MA1:-3.4684</span></>
          }>
            <Grid levels={[322]} top={120} />
            <Bars data={lon} top={120} zero={322} />
            <Series data={lon} top={120} color="#ffffff" />
            <Series data={lonMa} top={120} color="#ffff00" />
          </Pane>

          <Pane size="h-[74px] shrink-0" top={342} axis={[['0', 415]]} legend={
            <>SHORT(10) SHORT:0.1075 <span className="text-white">0.1075</span> <span className="text-[#ffff00]">MA1:-0.2014</span></>
          }>
            <Grid levels={[415]} top={342} />
            <Bars data={short} top={342} zero={415} />
            <Series data={short} top={342} color="#ffffff" />
            <Series data={shortMa} top={342} color="#ffff00" />
          </Pane>

          <Pane size="h-[74px] shrink-0" top={564}
            axis={[['100', 634], ['80', 661], ['50', 697], ['20', 733], ['0', 751]]} legend={
              <>KDJ(9,3,3) <span className="text-white">K:35.1136</span> <span className="text-[#ffff00]">D:30.8425</span> <span className="text-[#ff00ff]">J:43.6559</span></>
            }>
            <Grid levels={[634, 661, 697, 733, 757]} top={564} />
            <Series data={kdjK} top={564} color="#ffffff" />
            <Series data={kdjD} top={564} color="#ffff00" />
            <Series data={kdjJ} top={564} color="#ff00ff" />
          </Pane>

          <Pane size="flex-1 min-h-[70px] border-b-0" top={786} axis={[['120', 946]]} active legend={
            <>ARBR(26) <span className="text-white">AR:86.2745</span> <span className="text-[#ffff00]">BR:83.9136</span></>
          }>
            <Grid levels={[946]} top={786} color="#a00000" />
            <Series data={ar} top={786} color="#ffffff" />
            <Series data={br} top={786} color="#ffff00" />
          </Pane>

          {/* crosshair */}
          <span className="absolute top-[19px] bottom-0 right-[7px] w-px bg-white" />
        </main>

        <Quote />
      </div>

      {/* floating meter */}
      <span className="absolute -left-[28px] top-[6px] flex items-center justify-end w-[47px] h-[47px] pr-[2px] rounded-full border-2 border-white bg-linear-to-b from-[#57cf78] to-[#2fae55] shadow font-['DejaVu_Sans'] text-[10px] font-bold text-white">71</span>
    </div>
  )
}
